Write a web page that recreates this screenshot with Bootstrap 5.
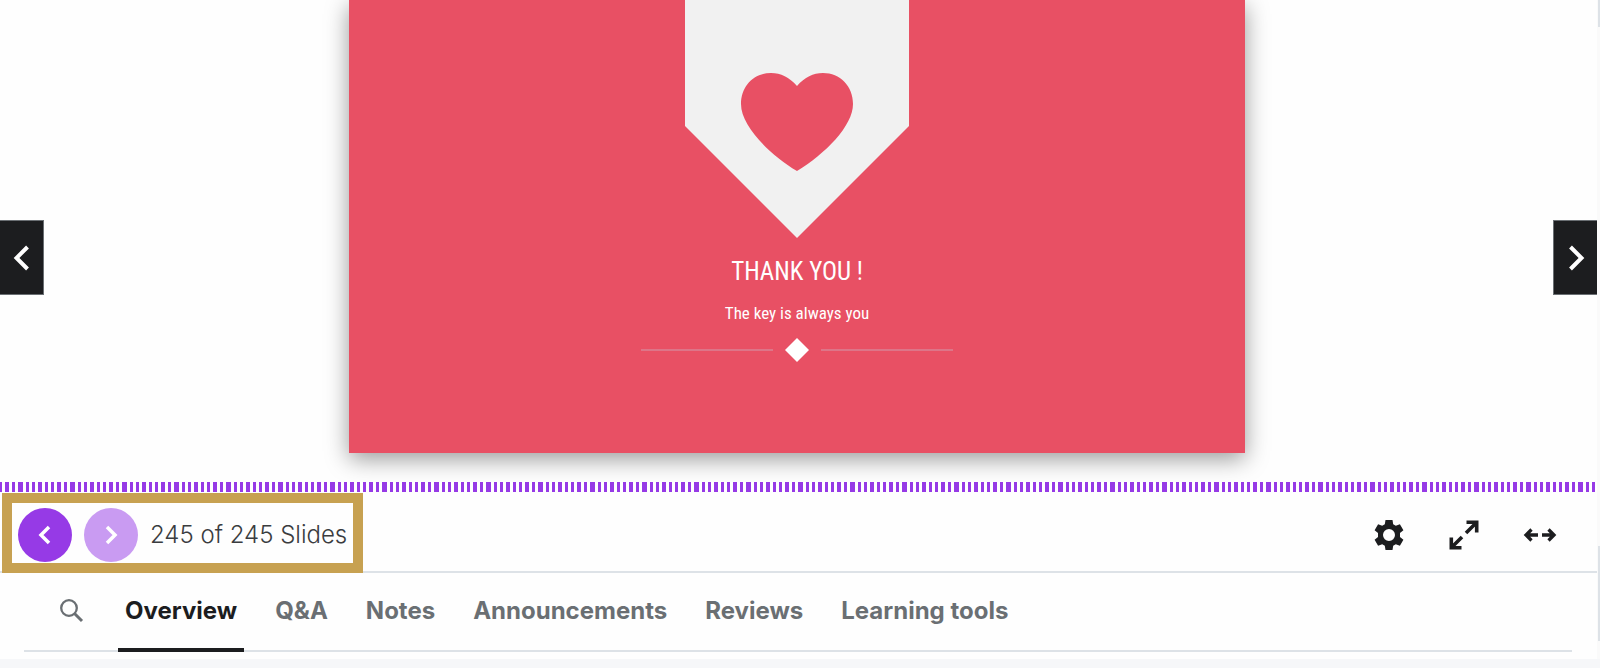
<!DOCTYPE html>
<html lang="en">
<head>
<meta charset="utf-8">
<meta name="viewport" content="width=device-width, initial-scale=1">
<title>Course player</title>
<link href="https://cdn.jsdelivr.net/npm/bootstrap@5.3.0/dist/css/bootstrap.min.css" rel="stylesheet">
<style>
:root { --purple: #963ae6; --ink: #1c1d1f; --rule: #dde2e7; --coral: #e85064; }
body { font-family: Inter, "Liberation Sans", sans-serif; background: #f6f7f9; }
.player { background: #fefefe; border-right: 3px solid #fafafa; padding-bottom: 7px; }
.stage { height: 482px; overflow: hidden; padding-right: 3px; }
.slide { width: 56.25%; height: 453px; background: var(--coral); color: #fff;
  box-shadow: 0 6px 22px rgba(0,0,0,.4); font-family: "Roboto Condensed", "Liberation Sans Narrow", Roboto, sans-serif; }
.slide h1 { font-size: 25px; line-height: 32px; font-weight: 400; margin: 18px 0 0; }
.slide p { font-size: 17px; line-height: 24px; margin: 13px 0 0; }
.divider { width: 312px; margin-top: 13px; gap: 12px; }
.divider span { flex: 1; height: 2px; background: #dd7588; }
.turn { width: 44px; height: 75px; top: 220px; background: var(--ink); color: #fff; border: 1px solid #6a6f73; }
.turn.start-0 { border-left: 0; }
.turn.end-0 { border-right: 0; }
.progress-dashes { height: 10px; margin-bottom: 1px; background: linear-gradient(90deg,
  var(--purple) 0 5px, #fff 5px 8px, var(--purple) 8px 11px, #fff 11px 14px,
  var(--purple) 14px 17px, #fff 17px 20px, var(--purple) 20px 24px, #fff 24px 27px,
  var(--purple) 27px 30px, #fff 30px 33px, var(--purple) 33px 36px, #fff 36px 39px,
  var(--purple) 39px 43px, #fff 43px 46px, var(--purple) 46px 49px, #fff 49px) 18px 0 / 52px 100%; }
.toolbar { padding: 0 40px 0 2px; box-shadow: inset 0 -2px var(--rule); }
.pager { border: 10px solid #c7a151; height: 80px; padding: 4px 6px 0; gap: 12px; }
.pager button { width: 54px; height: 54px; background: var(--purple); color: #fff; }
.pager button:disabled { background: #c99bf2; }
.pager span { font-size: 24px; line-height: 32px; font-weight: 300; color: #3a3c3f; white-space: nowrap; }
.tools { gap: 43px; color: var(--ink); }
.tools button { color: inherit; }
.tabs-bar { margin: 0 25px 0 24px; height: 79px; padding-left: 33px; gap: 24px; box-shadow: inset 0 -2px var(--rule); }
.tabs-bar a { font-size: 24px; line-height: 32px; font-weight: 700; color: #6a6f73; padding: 22px 7px 0; white-space: nowrap; text-decoration: none; }
.tabs-bar a.active { color: var(--ink); border-bottom: 4px solid var(--ink); }
.tabs-bar button { color: #6a6f73; width: 37px; }
.edge { width: 2px; background: var(--rule); right: 0; }
.edge.upper { top: 0; height: 27px; }
.edge.lower { top: 546px; height: 95px; }
</style>
</head>
<body>
<main class="player position-relative">
  <section class="stage position-relative d-flex justify-content-center align-items-start">
    <article class="slide d-flex flex-column align-items-center">
      <svg width="224" height="238" viewBox="0 0 224 238" aria-hidden="true">
        <path d="M0 0H224V126L112 238L0 126Z" fill="#f1f1f1"/>
        <path d="M112 86C104 77 96 73 86 73C69 73 56 86 56 104C56 126 84 154 112 171C140 154 168 126 168 104C168 86 155 73 138 73C128 73 120 77 112 86Z" fill="#e85064"/>
      </svg>
      <h1>THANK YOU !</h1>
      <p>The key is always you</p>
      <div class="divider d-flex align-items-center"><span></span><svg width="24" height="24" viewBox="0 0 24 24" aria-hidden="true"><path d="M12 0L24 12L12 24L0 12Z" fill="#fff"/></svg><span></span></div>
    </article>
    <button class="turn start-0 position-absolute p-0 d-flex align-items-center justify-content-center" aria-label="Previous slide"><svg width="18" height="28" viewBox="0 0 18 28" fill="none" stroke="currentColor" stroke-width="4"><path d="M14.500 3L3.500 14L14.500 25"/></svg></button>
    <button class="turn end-0 position-absolute p-0 d-flex align-items-center justify-content-center" aria-label="Next slide"><svg width="18" height="28" viewBox="0 0 18 28" fill="none" stroke="currentColor" stroke-width="4"><path d="M3.500 3L14.500 14L3.500 25"/></svg></button>
  </section>
  <div class="progress-dashes"></div>
  <section class="toolbar d-flex align-items-center justify-content-between">
    <div class="pager d-flex align-items-center">
      <button class="btn rounded-circle border-0 p-0 d-flex align-items-center justify-content-center" aria-label="Previous"><svg width="14" height="20" viewBox="0 0 14 20" fill="none" stroke="currentColor" stroke-width="3.500"><path d="M11 2L3 10L11 18"/></svg></button>
      <button class="btn rounded-circle border-0 p-0 d-flex align-items-center justify-content-center opacity-100 text-white" disabled aria-label="Next"><svg width="14" height="20" viewBox="0 0 14 20" fill="none" stroke="currentColor" stroke-width="3.500"><path d="M3 2L11 10L3 18"/></svg></button>
      <span>245 of 245 Slides</span>
    </div>
    <div class="tools d-flex align-items-center pt-1">
      <button class="btn border-0 p-0 d-flex" aria-label="Settings"><svg width="32" height="32" viewBox="0 0 32 32"><path fill="currentColor" fill-rule="evenodd" d="M12.500 1H19.500L20.200 5.200L22.800 6.700L26.900 5.200L30.400 11.200L27 13.900V18.100L30.400 20.800L26.900 26.800L22.800 25.300L20.200 26.800L19.500 31H12.500L11.800 26.800L9.200 25.300L5.100 26.800L1.600 20.800L5 18.100V13.900L1.600 11.200L5.100 5.200L9.200 6.700L11.800 5.200ZM16 10A6 6 0 1 0 16 22A6 6 0 1 0 16 10Z"/></svg></button>
      <button class="btn border-0 p-0 d-flex" aria-label="Fullscreen"><svg width="32" height="32" viewBox="0 0 32 32" fill="none" stroke="currentColor" stroke-width="3.600"><path d="M18.500 3.300H28.700V13.500M28 4L18 14M3.300 18.500V28.700H13.500M4 28L14 18"/></svg></button>
      <button class="btn border-0 p-0 d-flex" aria-label="Expanded view"><svg width="34" height="32" viewBox="0 0 34 32" fill="none" stroke="currentColor" stroke-width="3.300"><path d="M15 16H3M8.500 10.500L3 16L8.500 21.500M19 16H31M25.500 10.500L31 16L25.500 21.500"/></svg></button>
    </div>
  </section>
  <nav class="tabs-bar d-flex" aria-label="Course sections">
    <button class="btn border-0 p-0 pb-1 d-flex align-items-center" aria-label="Search"><svg width="28" height="28" viewBox="0 0 28 28" fill="none" stroke="currentColor"><circle cx="12" cy="11" r="7.800" stroke-width="2.300"/><path d="M17.500 16.500L25 24" stroke-width="3"/></svg></button>
    <a href="#" class="active" aria-current="page">Overview</a>
    <a href="#">Q&amp;A</a>
    <a href="#">Notes</a>
    <a href="#">Announcements</a>
    <a href="#">Reviews</a>
    <a href="#">Learning tools</a>
  </nav>
</main>
<i class="edge upper position-absolute"></i>
<i class="edge lower position-absolute"></i>
<script src="https://cdn.jsdelivr.net/npm/bootstrap@5.3.0/dist/js/bootstrap.bundle.min.js"></script>
</body>
</html>
